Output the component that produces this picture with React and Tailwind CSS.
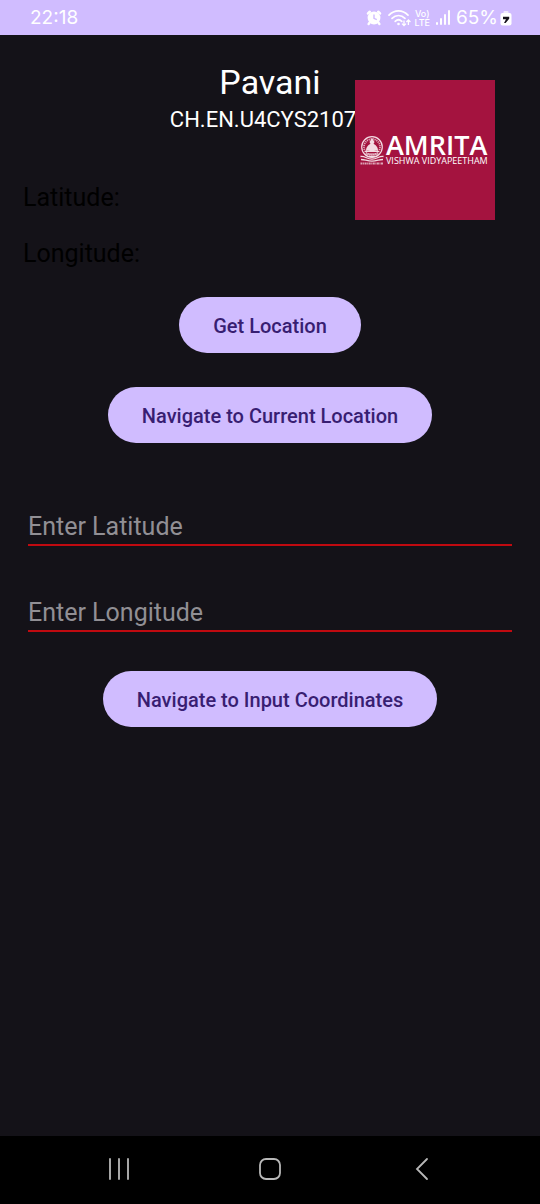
import React from "react";

function AlarmIcon() {
  return (
    <svg width="16" height="18" viewBox="0 0 16 18" aria-hidden="true">
      <path d="M2 4.400 3.800 2.800M14 4.400 12.200 2.800" stroke="#fff" strokeWidth="2.600" strokeLinecap="round" />
      <circle cx="8" cy="9" r="6.400" fill="#fff" />
      <path d="M3.500 13.800 2.600 15M12.500 13.800l.900 1.200" stroke="#fff" strokeWidth="2.400" strokeLinecap="round" />
      <path d="M8 5.600V9.400l2.800 1.200" fill="none" stroke="#d0bcff" strokeWidth="1.400" />
    </svg>
  );
}

function WifiIcon() {
  return (
    <svg width="24" height="18" viewBox="0 0 24 18" fill="none" stroke="#fff" aria-hidden="true">
      <path d="M1 6.200C6.500.400 14.500.400 20 6.200" strokeWidth="1.700" strokeLinecap="round" />
      <path d="M4 9.400c3.800-3.900 9.200-3.900 13 0" strokeWidth="1.700" strokeLinecap="round" />
      <path d="M7.200 12.400c2-2 4.600-2 6.600 0" strokeWidth="1.700" strokeLinecap="round" />
      <circle cx="10.500" cy="15" r="1.300" fill="#fff" stroke="none" />
      <path d="M16 11.500V16.500M14 14.600l2 2 2-2M20.400 16V11M18.400 13l2-2 2 2" strokeWidth="1.300" />
    </svg>
  );
}

function SignalIcon() {
  return (
    <svg width="14" height="16" viewBox="0 0 14 16" fill="#fff" aria-hidden="true">
      <rect x="0" y="12" width="2" height="3" rx="1" />
      <rect x="4" y="8" width="2" height="7" rx="1" />
      <rect x="8" y="4" width="2" height="11" rx="1" />
      <rect x="12" y="0" width="2" height="15" rx="1" />
    </svg>
  );
}

function BatteryIcon() {
  return (
    <svg width="12" height="17" viewBox="0 0 12 17" aria-hidden="true">
      <rect x="3.500" y="2" width="5" height="4" rx="1" fill="#f1eaff" />
      <rect x="0.500" y="4" width="11" height="12.500" rx="2" fill="#fff" />
      <path d="M3 7.800h6.200v1.900L5.600 14H4l2-3.800H3z" fill="#17131c" />
    </svg>
  );
}

function StatusBar() {
  return (
    <header className="flex h-[35px] shrink-0 items-center justify-between bg-[#d0bcff] pl-[30px] pr-7 font-['Inter',sans-serif] text-[19px] leading-6 text-white">
      <time>22:18</time>
      <div className="flex items-center">
        <AlarmIcon />
        <span className="ml-1.5 flex">
          <WifiIcon />
        </span>
        <span className="ml-0.5 flex flex-col items-center text-[9px] leading-[9px] font-medium">
          <span>Vo)</span>
          <span>LTE</span>
        </span>
        <span className="ml-1.5 flex">
          <SignalIcon />
        </span>
        <span className="ml-1.5">65%</span>
        <span className="ml-0.5 flex">
          <BatteryIcon />
        </span>
      </div>
    </header>
  );
}

function AmritaLogo() {
  return (
    <svg className="absolute top-[45px] right-[45px]" width="140" height="140" viewBox="0 0 140 140" role="img" aria-label="Amrita Vishwa Vidyapeetham">
      <rect width="140" height="140" fill="#a4133f" />
      <g fill="none" stroke="#f3dbe3">
        <circle cx="17" cy="67" r="10.300" strokeWidth="1.200" />
        <circle cx="17" cy="67" r="8" strokeWidth="1.800" strokeDasharray="1.200 0.800" opacity="0.750" />
        <path d="M10 71.500h14M10.500 74h13M12.500 76.300h9" strokeWidth="1.200" />
        <path d="M5.500 76.500c4-1 6 2.600 11.500 2.600s7.500-3.600 11.500-2.600M6 79.500c4 0 6 1.600 11 1.600s7-1.600 11-1.600" strokeWidth="1.300" />
        <path d="M5.500 83.500h23" strokeWidth="2" strokeDasharray="2 0.600 1 0.500" opacity="0.750" />
      </g>
      <path d="M17 58l2.500 4-1 2h-3l-1-2zM11 71c0-4 2-6 6-8 4 2 6 4 6 8-2-.500-4-.300-6 .800-2-1.100-4-1.300-6-.800z" fill="#f3dbe3" />
      <text x="31" y="75" fill="#fff" className="font-['Open_Sans',sans-serif] text-[27px] font-semibold">AMRITA</text>
      <text x="31" y="84" fill="#fff" className="font-['Open_Sans',sans-serif] text-[9px] font-medium">VISHWA VIDYAPEETHAM</text>
    </svg>
  );
}

function PillButton({ children }) {
  return (
    <button type="button" className="h-14 rounded-full bg-[#d0bcff] px-[34px] pt-0.5 text-[20px] leading-6 font-medium text-[#381e72]">
      {children}
    </button>
  );
}

function CoordinateInput({ label }) {
  return (
    <input
      type="text"
      inputMode="decimal"
      aria-label={label}
      placeholder={label}
      className="block h-9 w-full border-b-2 border-[#c00a10] bg-transparent pb-0.5 text-[25px] leading-8 text-white outline-none placeholder:text-[#918f94]"
    />
  );
}

function NavigationBar() {
  return (
    <nav className="flex h-[68px] shrink-0 items-center justify-around bg-black px-11 pb-0.5">
      <button type="button" aria-label="Recent apps">
        <svg width="24" height="24" viewBox="0 0 24 24" stroke="#b8b8b8" strokeWidth="1.800" strokeLinecap="round">
          <path d="M3 2v20M12 2v20M21 2v20" />
        </svg>
      </button>
      <button type="button" aria-label="Home">
        <svg width="24" height="24" viewBox="0 0 24 24" fill="none" stroke="#b8b8b8" strokeWidth="1.800">
          <rect x="2" y="2" width="20" height="20" rx="6" />
        </svg>
      </button>
      <button type="button" aria-label="Back">
        <svg width="24" height="24" viewBox="0 0 24 24" fill="none" stroke="#b8b8b8" strokeWidth="1.800" strokeLinecap="round">
          <path d="M18 2 8 12l10 10" />
        </svg>
      </button>
    </nav>
  );
}

export default function App() {
  return (
    <div className="flex min-h-screen flex-col bg-[#141218] font-['Roboto',sans-serif]">
      <StatusBar />
      <main className="relative flex grow flex-col px-[23px] pt-[27px]">
        <div className="flex flex-col items-center text-white">
          <h1 className="text-[34px] leading-10">Pavani</h1>
          <p className="pr-3.5 text-[22px] leading-9">CH.EN.U4CYS2107</p>
        </div>
        <AmritaLogo />
        <div className="mt-11 flex flex-col gap-6 text-[25px] leading-8 text-black">
          <p>Latitude:</p>
          <p>Longitude:</p>
        </div>
        <div className="mt-[27px] flex flex-col items-center gap-[34px]">
          <PillButton>Get Location</PillButton>
          <PillButton>Navigate to Current Location</PillButton>
        </div>
        <form className="mt-[67px] flex flex-col px-[5px]">
          <div className="flex flex-col gap-[50px]">
            <CoordinateInput label="Enter Latitude" />
            <CoordinateInput label="Enter Longitude" />
          </div>
          <div className="mt-[39px] flex justify-center">
            <PillButton>Navigate to Input Coordinates</PillButton>
          </div>
        </form>
      </main>
      <NavigationBar />
    </div>
  );
}
